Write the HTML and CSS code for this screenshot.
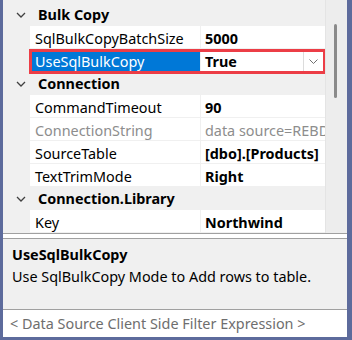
FILE: index.html
```html
<!DOCTYPE html>
<html lang="en">
<head>
    <meta charset="UTF-8">
    <title>Property Grid</title>
    <link rel="stylesheet" href="styles.css">
</head>
<body>
<div class="frame">
    <div class="grid">
        <div class="rows">
            <div class="row category">
                <span class="toggle"><svg width="10" height="6" viewBox="0 0 10 6"><path d="M1 1 L5 5 L9 1" fill="none" stroke="#404040" stroke-width="1.3"/></svg></span>
                <span class="cat-name">Bulk Copy</span>
            </div>
            <div class="row">
                <span class="indent"></span>
                <span class="name">SqlBulkCopyBatchSize</span>
                <span class="value">5000</span>
            </div>
            <div class="row selected">
                <span class="indent"></span>
                <span class="name">UseSqlBulkCopy</span>
                <span class="value">True
                    <span class="drop"><svg width="9" height="5" viewBox="0 0 9 5"><path d="M0.5 0.5 L4.5 4.5 L8.5 0.5" fill="none" stroke="#707070" stroke-width="1"/></svg></span>
                </span>
            </div>
            <div class="row category">
                <span class="toggle"><svg width="10" height="6" viewBox="0 0 10 6"><path d="M1 1 L5 5 L9 1" fill="none" stroke="#404040" stroke-width="1.3"/></svg></span>
                <span class="cat-name">Connection</span>
            </div>
            <div class="row">
                <span class="indent"></span>
                <span class="name">CommandTimeout</span>
                <span class="value">90</span>
            </div>
            <div class="row disabled">
                <span class="indent"></span>
                <span class="name">ConnectionString</span>
                <span class="value">data source=REBD</span>
            </div>
            <div class="row">
                <span class="indent"></span>
                <span class="name">SourceTable</span>
                <span class="value">[dbo].[Products]</span>
            </div>
            <div class="row">
                <span class="indent"></span>
                <span class="name">TextTrimMode</span>
                <span class="value">Right</span>
            </div>
            <div class="row category">
                <span class="toggle"><svg width="10" height="6" viewBox="0 0 10 6"><path d="M1 1 L5 5 L9 1" fill="none" stroke="#404040" stroke-width="1.3"/></svg></span>
                <span class="cat-name">Connection.Library</span>
            </div>
            <div class="row">
                <span class="indent"></span>
                <span class="name">Key</span>
                <span class="value">Northwind</span>
            </div>
        </div>
        <div class="scrollbar">
            <div class="thumb"></div>
        </div>
    </div>
    <div class="description">
        <div class="desc-title">UseSqlBulkCopy</div>
        <div class="desc-text">Use SqlBulkCopy Mode to Add rows to table.</div>
    </div>
    <div class="filter">&lt; Data Source Client Side Filter Expression &gt;</div>
</div>
</body>
</html>
```
FILE: styles.css
```css
body {
    margin: 0;
    background-color: #5d6b9c;
    font-family: "Noto Sans", "Open Sans", sans-serif;
    font-size: 14.4px;
    color: #000;
}

.frame {
    margin: 0 5px 3px 3px;
    height: 337px;
    background-color: #fff;
    display: flex;
    flex-direction: column;
}

.grid {
    display: flex;
    height: 233px;
    border-bottom: 1px solid #a0a0a0;
}

.rows {
    width: 323px;
    padding-top: 3px;
    background-color: #f0f0f0;
    overflow: hidden;
}

.row {
    display: flex;
    height: 23px;
    align-items: stretch;
    position: relative;
}

.row .indent {
    width: 27px;
    flex: none;
}

.row .name {
    width: 165px;
    flex: none;
    padding: 3px 0 0 5px;
    background-color: #fff;
    border-right: 1px solid #f0f0f0;
    border-bottom: 1px solid #f0f0f0;
    line-height: 19px;
    white-space: nowrap;
    overflow: hidden;
}

.row .value {
    flex: 1;
    padding: 3px 0 0 4px;
    background-color: #fff;
    border-bottom: 1px solid #f0f0f0;
    line-height: 19px;
    font-weight: bold;
    white-space: nowrap;
    overflow: hidden;
    position: relative;
}

.category {
    align-items: center;
}

.category .toggle {
    width: 32px;
    flex: none;
    display: flex;
    justify-content: center;
    padding-left: 3px;
    box-sizing: border-box;
}

.category .cat-name {
    font-weight: bold;
    padding-left: 3px;
}

.disabled .name,
.disabled .value {
    color: #8d8d8d;
    font-weight: normal;
}

.selected .name {
    background-color: #0078d7;
    color: #fff;
}

.selected::after {
    content: "";
    position: absolute;
    left: 26px;
    top: 0;
    right: -1px;
    bottom: -2px;
    border: 3px solid #ec3d46;
}

.drop {
    position: absolute;
    right: 2px;
    top: 3px;
    width: 19px;
    height: 19px;
    border-left: 1px solid #dcdcdc;
    background-color: #fff;
    display: flex;
    align-items: center;
    justify-content: center;
}

.scrollbar {
    width: 21px;
    background-color: #ededed;
    border-left: 1px solid #e4e4e4;
    position: relative;
}

.thumb {
    position: absolute;
    left: 8px;
    top: 24px;
    width: 3px;
    height: 74px;
    border-radius: 2px;
    background-color: #8a8a8a;
}

.description {
    margin-top: 4px;
    border-top: 1px solid #a0a0a0;
    border-bottom: 1px solid #a0a0a0;
    background-color: #f0f0f0;
    height: 71px;
    padding: 5px 9px 0;
}

.desc-title {
    font-weight: bold;
    line-height: 22px;
}

.desc-text {
    line-height: 22px;
}

.filter {
    flex: 1;
    padding: 1px 0 0 7px;
    line-height: 26px;
    color: #6e6e6e;
    white-space: nowrap;
}
```
